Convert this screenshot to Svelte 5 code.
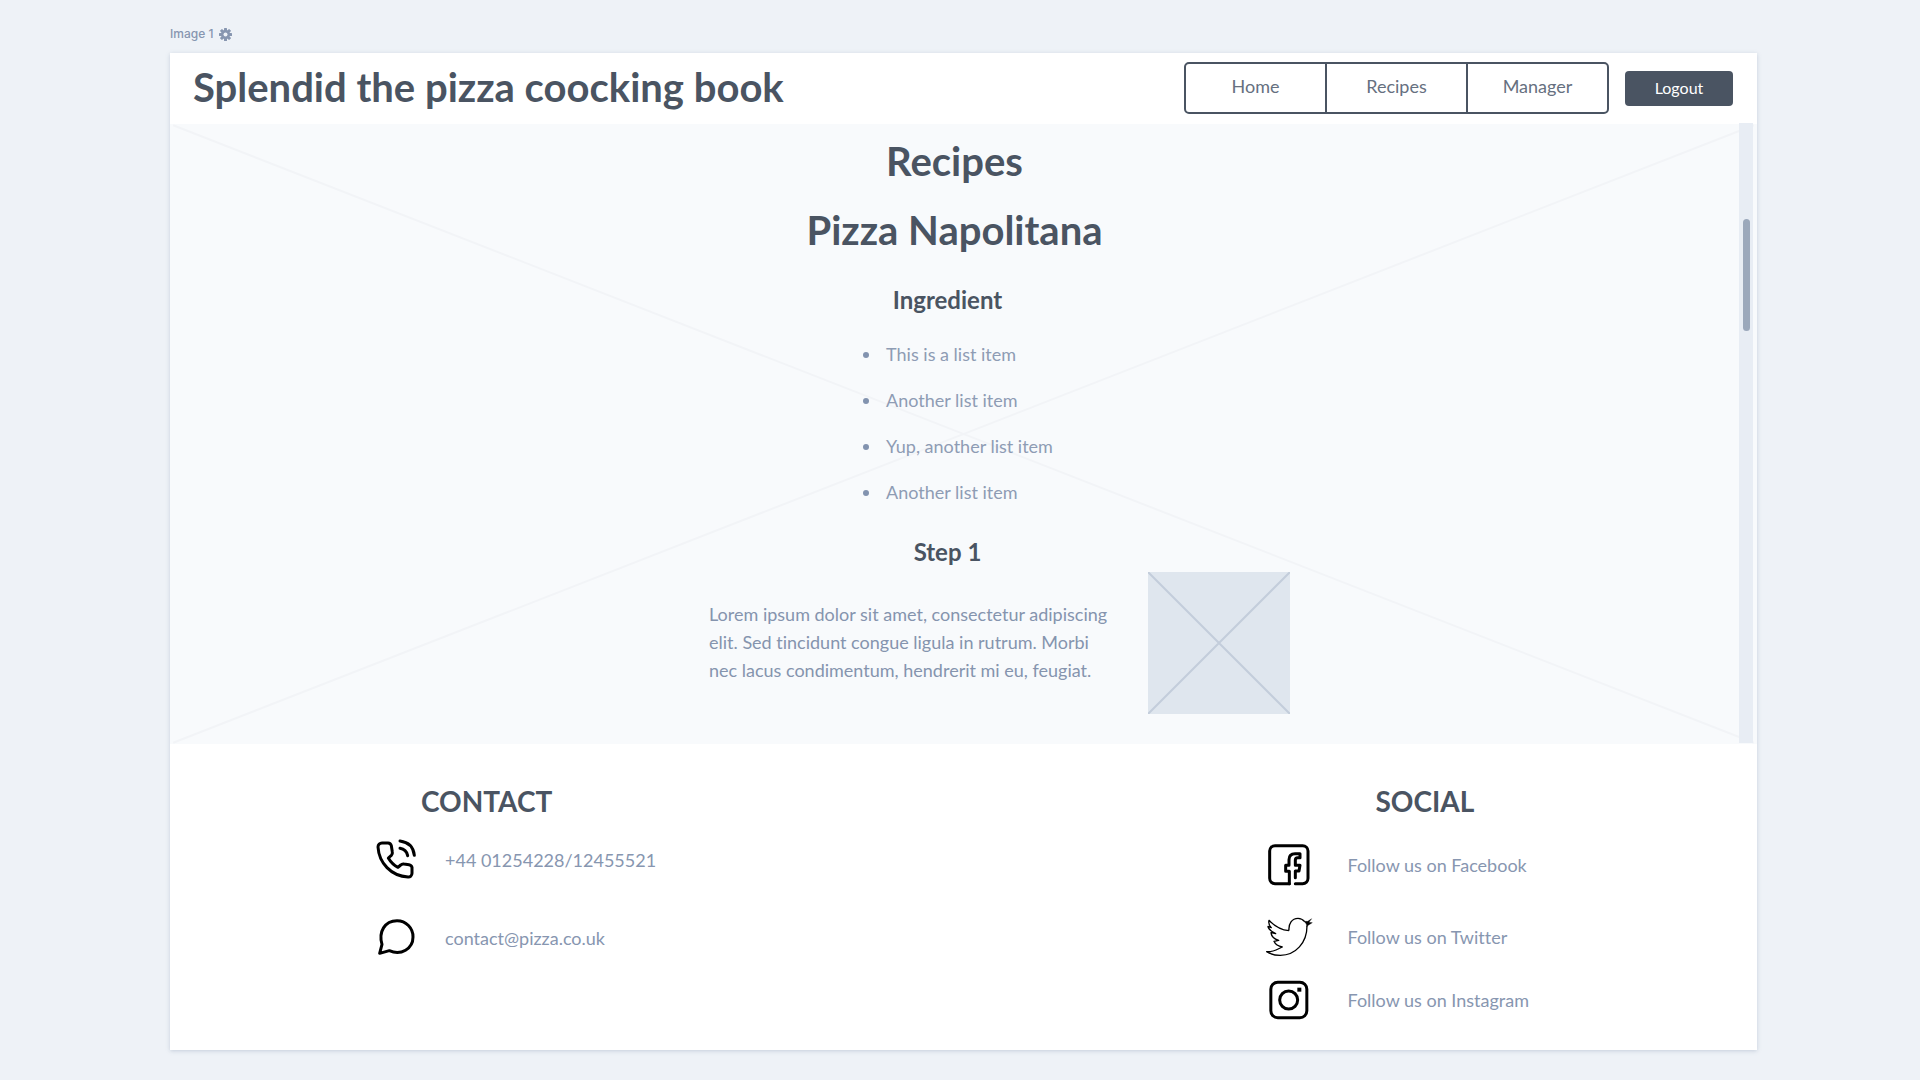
<script>
  const links = ['Home', 'Recipes', 'Manager'];
  const ingredients = ['This is a list item', 'Another list item', 'Yup, another list item', 'Another list item'];
</script>

<div class="stage">
  <div class="label">
    <span>Image 1</span>
    <svg class="gear" viewBox="0 0 26 26" aria-hidden="true">
      <g fill="currentColor">
        <rect x="10" y="0" width="6" height="26" rx="1" />
        <rect x="10" y="0" width="6" height="26" rx="1" transform="rotate(45 13 13)" />
        <rect x="10" y="0" width="6" height="26" rx="1" transform="rotate(90 13 13)" />
        <rect x="10" y="0" width="6" height="26" rx="1" transform="rotate(135 13 13)" />
        <circle cx="13" cy="13" r="9" />
      </g>
      <circle cx="13" cy="13" r="4" fill="#eef2f7" />
    </svg>
  </div>

  <div class="card">
    <header>
      <h1>Splendid the pizza coocking book</h1>
      <div class="actions">
        <nav>
          {#each links as link}
            <a href="#{link.toLowerCase()}">{link}</a>
          {/each}
        </nav>
        <button type="button">Logout</button>
      </div>
    </header>

    <main>
      <svg class="cross" viewBox="0 0 100 100" preserveAspectRatio="none" aria-hidden="true">
        <path d="M0.2 0.2 99.8 99.8M99.8 0.2 0.2 99.8" />
      </svg>
      <div class="content">
        <h2>Recipes</h2>
        <h2>Pizza Napolitana</h2>
        <h3 class="ingredient">Ingredient</h3>
        <ul class="ingredients">
          {#each ingredients as item}
            <li>{item}</li>
          {/each}
        </ul>
        <h3 class="step">Step 1</h3>
        <div class="step-row">
          <p>Lorem ipsum dolor sit amet, consectetur adipiscing elit. Sed tincidunt congue ligula in rutrum. Morbi nec lacus condimentum, hendrerit mi eu, feugiat.</p>
          <svg class="picture" viewBox="0 0 142 142" role="img" aria-label="Step picture">
            <path d="M0 0 142 142M142 0 0 142" />
          </svg>
        </div>
      </div>
      <div class="track"><div class="thumb"></div></div>
    </main>

    <footer>
      <section class="contact">
        <h2>CONTACT</h2>
        <ul>
          <li>
            <svg class="phone" viewBox="49 205 120 120" fill="none" stroke="#000" stroke-width="9" stroke-linecap="round" stroke-linejoin="round" aria-hidden="true">
              <path d="M157 290v18a11 11 0 0 1-12 11C94 316 58 277 55 229a12 12 0 0 1 12-12h18a11 11 0 0 1 10 8l3 19a11 11 0 0 1-3 10l-9 8q11 19 29 28l8-7a11 11 0 0 1 10-3l15 2a11 11 0 0 1 9 8Z" />
              <path d="M121 211q39 5 43 43M121 233q19 3 23 22" />
            </svg>
            <span>+44 01254228/12455521</span>
          </li>
          <li>
            <svg class="chat" viewBox="51 440 120 120" fill="none" stroke="#000" stroke-width="9" stroke-linejoin="round" aria-hidden="true">
              <path d="M62 549 69 522C58 485 77 451 114 451a48 48 0 0 1 48 49C162 535 126 557 91 541Z" />
            </svg>
            <span>contact@pizza.co.uk</span>
          </li>
        </ul>
      </section>

      <section class="social">
        <h2>SOCIAL</h2>
        <ul>
          <li>
            <svg viewBox="47 218 144 132" fill="none" stroke="#000" stroke-width="9" stroke-linecap="round" stroke-linejoin="round" aria-hidden="true">
              <path d="M120 340H77a16 16 0 0 1-16-16V242a16 16 0 0 1 16-16h83a16 16 0 0 1 16 16v82a16 16 0 0 1-16 16H138" />
              <path d="M120 340V303H109V285h10V268q0-18 18-18h15v12h-7q-7 0-7 7v16h14l-3 17H138v20" />
            </svg>
            <a href="#facebook">Follow us on Facebook</a>
          </li>
          <li>
            <svg viewBox="47 437 144 132" fill="none" stroke="#000" stroke-width="4" stroke-linejoin="round" aria-hidden="true">
              <path d="M119 484C117 463 128 447 146 447q12 0 20 10M173 470C173 520 139 558 93 558q-24 0-41-11 15 1 28-5l19-9q-19-3-25-17l14-3q-21-6-23-23l14 3Q56 481 56 471l10 4q-10-9-7-22Q86 481 119 484" />
              <path d="m164 456 11 0 12-8-8 11 10 1-11 7-6 5-1-8Z" fill="#000" stroke-width="1" />
            </svg>
            <a href="#twitter">Follow us on Twitter</a>
          </li>
          <li>
            <svg viewBox="47 625 144 132" fill="none" stroke="#000" stroke-width="9" aria-hidden="true">
              <rect x="64.500" y="637.500" width="108" height="107" rx="21" />
              <circle cx="118" cy="691" r="27" />
              <rect x="144" y="654" width="12" height="12" fill="#000" stroke="none" />
            </svg>
            <a href="#instagram">Follow us on Instagram</a>
          </li>
        </ul>
      </section>
    </footer>
  </div>
</div>

<style>
  :global(body) {
    margin: 0;
    background: #eef2f7;
  }

  .stage {
    box-sizing: border-box;
    min-height: 100vh;
    padding: 24px 163px 30px 170px;
    font-family: Lato, 'Liberation Sans', sans-serif;
    font-variant-ligatures: none;
    color: #4a5462;
  }

  h1,
  h2,
  h3,
  p,
  ul {
    margin: 0;
    padding: 0;
  }

  .label {
    display: flex;
    align-items: center;
    gap: 6px;
    height: 20px;
    margin-bottom: 9px;
    font: 500 12px/20px Inter, sans-serif;
    color: #8796b0;
  }

  .gear {
    width: 13px;
    height: 13px;
  }

  .card {
    background: #fff;
    box-shadow: 0 1px 4px rgb(120 140 170 / 35%);
  }

  header {
    display: flex;
    justify-content: space-between;
    align-items: flex-start;
    padding: 9px 24px 10px 23px;
  }

  h1,
  main h2 {
    font-size: 40px;
    line-height: 50px;
    font-weight: 700;
  }

  .actions {
    display: flex;
    align-items: center;
    gap: 16px;
  }

  nav {
    display: flex;
    box-sizing: border-box;
    width: 425px;
    height: 52px;
    border: 2px solid #4a5462;
    border-radius: 5px;
  }

  nav a {
    flex: 1;
    padding-top: 8px;
    font-size: 18px;
    line-height: 28px;
    text-align: center;
    text-decoration: none;
    color: #667080;
  }

  nav a + a {
    border-left: 2px solid #4a5462;
  }

  button {
    width: 108px;
    height: 35px;
    padding: 0;
    border: 0;
    border-radius: 4px;
    background: #4a5462;
    font: 400 16px/20px Lato, sans-serif;
    color: #fff;
  }

  main {
    position: relative;
    display: flex;
    background: #f8fafc;
  }

  .cross {
    position: absolute;
    inset: 0;
    width: 100%;
    height: 100%;
  }

  .cross path {
    stroke: #f2f4f7;
    stroke-width: 2px;
    vector-effect: non-scaling-stroke;
  }

  .content {
    position: relative;
    flex: 1;
    display: flex;
    flex-direction: column;
    align-items: center;
    padding: 12px 0 30px;
  }

  main h2 + h2 {
    margin-top: 19px;
  }

  h3 {
    margin-right: 14px;
    font-size: 24px;
    line-height: 32px;
    font-weight: 700;
  }

  .ingredient {
    margin-top: 29px;
  }

  .step {
    margin-top: 21px;
  }

  .ingredients {
    margin-top: 15px;
    padding-left: 26px;
    font-size: 18px;
    line-height: 46px;
    color: #8e9cb4;
  }

  .ingredients li {
    padding-left: 4px;
  }

  .ingredients li::marker {
    color: #8293af;
  }

  .step-row {
    display: flex;
    align-items: center;
    gap: 39px;
    margin-top: 4px;
    padding-left: 90px;
  }

  p {
    width: 400px;
    padding-bottom: 2px;
    font-size: 18px;
    line-height: 28px;
    color: #8594ae;
  }

  .picture {
    width: 142px;
    height: 142px;
    background: #dfe6ee;
  }

  .picture path {
    stroke: #c3cddb;
    stroke-width: 2px;
  }

  .track {
    position: relative;
    width: 14px;
    margin: -1px 4px 1px 0;
    background: #e8edf4;
  }

  .thumb {
    width: 7px;
    height: 112px;
    margin: 96px auto 0;
    border-radius: 4px;
    background: #9ba8bb;
  }

  footer {
    display: flex;
    justify-content: space-between;
    padding: 37px 228px 28px 206px;
  }

  footer h2 {
    font-size: 28px;
    line-height: 40px;
    font-weight: 700;
  }

  .contact h2 {
    padding-left: 45px;
  }

  .social h2 {
    padding-left: 110px;
  }

  footer ul {
    list-style: none;
    font-size: 18px;
    line-height: 28px;
    color: #8796b0;
  }

  footer li {
    display: flex;
    align-items: center;
    height: 44px;
  }

  footer a {
    color: inherit;
    text-decoration: none;
  }

  .contact ul {
    margin-top: 16px;
  }

  .contact li {
    gap: 29px;
  }

  .contact span {
    padding-top: 2px;
  }

  .contact li + li {
    margin-top: 34px;
  }

  .contact svg {
    width: 40px;
    height: 40px;
  }

  .social ul {
    margin-top: 22px;
  }

  .social li {
    gap: 34px;
    margin-bottom: 28px;
  }

  .social li + li {
    margin-bottom: 19px;
  }

  .social li:last-child {
    margin-bottom: 0;
  }

  .social svg {
    width: 48px;
    height: 44px;
  }
</style>
